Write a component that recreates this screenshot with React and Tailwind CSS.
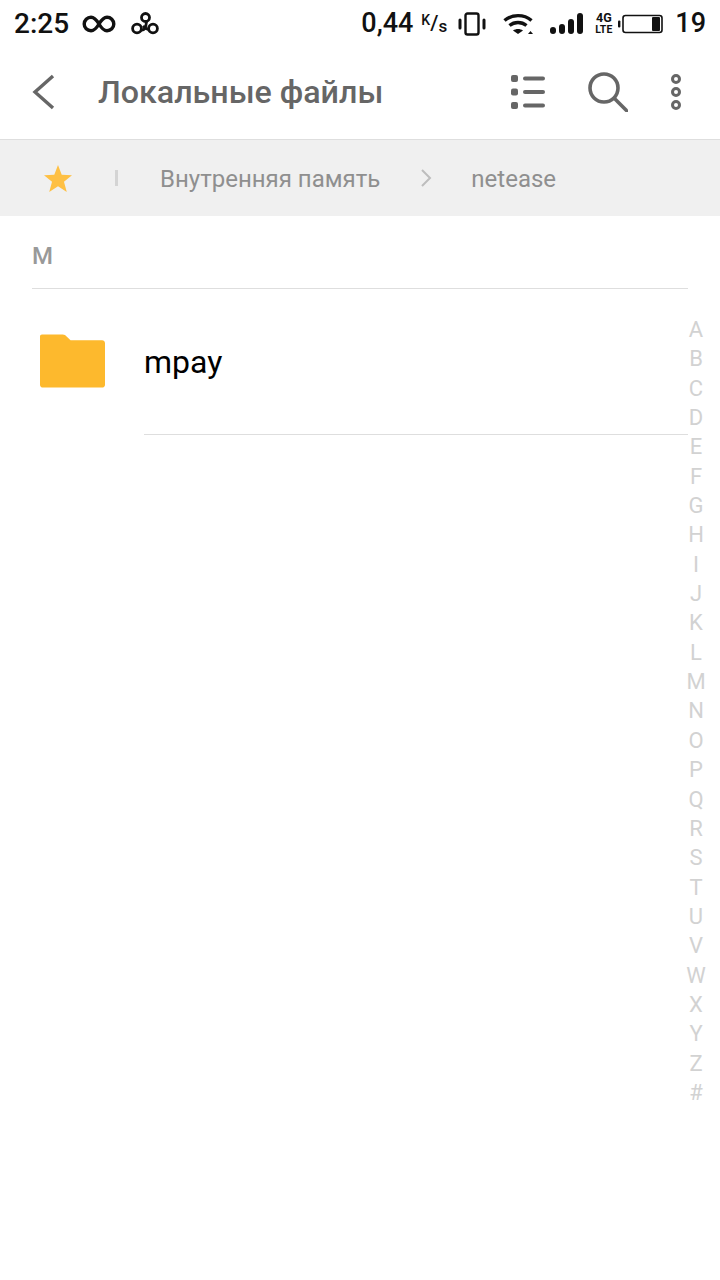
const letters = "ABCDEFGHIJKLMNOPQRSTUVWXYZ#".split("");

function LoopIcon() {
  return (
    <svg width="34" height="20" viewBox="0 0 34 20" fill="none" stroke="#111" strokeWidth="3.400">
      <path d="M17 10C14 5 12 3.200 9 3.200a6.800 6.800 0 0 0 0 13.600c3 0 5-1.800 8-6.800s5-6.800 8-6.800a6.800 6.800 0 0 1 0 13.600c-3 0-5-1.800-8-6.800z" />
    </svg>
  );
}

function TrefoilIcon() {
  return (
    <svg width="28" height="23" viewBox="0 0 28 23" fill="none" stroke="#111" strokeWidth="2.800">
      <circle cx="14.500" cy="5.500" r="4" />
      <circle cx="6" cy="16.500" r="4.400" />
      <circle cx="22" cy="16.500" r="4.400" />
      <path d="M10 18c3 .5 5-1.500 5.500-8.500" />
      <path d="M17.500 17.500c-2-.5-4-2-5.500-3.500" />
    </svg>
  );
}

function VibrateIcon() {
  return (
    <svg width="28" height="24" viewBox="0 0 28 24" fill="none" stroke="#111">
      <rect x="7.500" y="1.500" width="13" height="21" rx="2" strokeWidth="2.400" />
      <path d="M2 8v8M26 8v8" strokeWidth="3" strokeLinecap="round" />
    </svg>
  );
}

function WifiIcon() {
  return (
    <svg width="30" height="22" viewBox="0 0 30 22" fill="none" stroke="#111" strokeWidth="3.400">
      <path d="M1.500 7.500C9 1 21 1 28.500 7.500" />
      <path d="M6.500 12.500c5-4 12-4 17 0" />
      <path d="M10 17.500l5 3.500 5-3.500c-3-2-7-2-10 0z" fill="#111" stroke="none" />
      <path d="M25 21h5l-2.500-3z" fill="#111" stroke="none" />
    </svg>
  );
}

function SignalIcon() {
  return (
    <div className="flex items-end gap-[3px] h-[21px]">
      <div className="w-[6px] h-[7px] rounded-full bg-[#111]" />
      <div className="w-[6px] h-[10px] rounded-full bg-[#111]" />
      <div className="w-[6px] h-[15px] rounded-full bg-[#111]" />
      <div className="w-[6px] h-[21px] rounded-full bg-[#111]" />
    </div>
  );
}

function BatteryIcon() {
  return (
    <svg width="45" height="20" viewBox="0 0 45 20" fill="none">
      <rect x="0" y="6.500" width="2.400" height="7" rx="1" fill="#111" />
      <rect x="5" y="1.500" width="39" height="17" rx="2.500" stroke="#111" strokeWidth="1.600" />
      <rect x="34" y="3" width="8" height="14" rx="1" fill="#111" />
    </svg>
  );
}

function Speed() {
  return (
    <div className="ml-[8px] flex h-[22px] w-[23px] font-medium leading-none">
      <span className="text-[14px]">K</span>
      <span className="text-[21px] self-center">/</span>
      <span className="text-[17px] self-end">s</span>
    </div>
  );
}

function StatusBar() {
  return (
    <div className="h-[47px] flex items-center pl-[14px] pr-[14px] text-[#111] font-medium text-[27px]">
      <span className="text-[28px] w-[54px] whitespace-nowrap">2:25</span>
      <div className="ml-[14px]"><LoopIcon /></div>
      <div className="ml-[15px]"><TrefoilIcon /></div>
      <div className="ml-auto flex items-center">
        <span className="whitespace-nowrap">0,44</span>
        <Speed />
        <div className="ml-[14px]"><VibrateIcon /></div>
        <div className="ml-[17px]"><WifiIcon /></div>
        <div className="ml-[17px]"><SignalIcon /></div>
        <div className="ml-[12px] flex flex-col items-center font-bold">
          <span className="text-[12.5px] leading-[12px]">4G</span>
          <span className="text-[10.5px] leading-[11px]">LTE</span>
        </div>
        <div className="ml-[6px]"><BatteryIcon /></div>
        <span className="ml-[12px]">19</span>
      </div>
    </div>
  );
}

function Toolbar() {
  return (
    <div className="h-[93px] pb-[2px] flex items-center border-b border-[#dedede] pl-[32px] text-[#666]">
      <svg width="24" height="36" viewBox="0 0 24 36" fill="none" stroke="#666" strokeWidth="3.400">
        <path d="M21 2L3 18l18 16" />
      </svg>
      <h1 className="ml-[42px] text-[32.2px] font-medium whitespace-nowrap">Локальные файлы</h1>
      <div className="ml-auto flex items-center">
        <svg width="34" height="34" viewBox="0 0 34 34" fill="#666">
          <rect x="0" y="0" width="7" height="7" rx="2" />
          <rect x="0" y="13.500" width="7" height="7" rx="2" />
          <rect x="0" y="27" width="7" height="7" rx="2" />
          <rect x="12" y="1.500" width="22" height="4" rx="2" />
          <rect x="12" y="15" width="22" height="4" rx="2" />
          <rect x="12" y="28.500" width="22" height="4" rx="2" />
        </svg>
        <svg className="ml-[43px]" width="40" height="40" viewBox="0 0 40 40" fill="none" stroke="#666" strokeWidth="3.600">
          <circle cx="16" cy="16" r="14" />
          <path d="M26.500 26.500L39 39" strokeLinecap="round" />
        </svg>
        <svg className="ml-[41px] mr-[37px]" width="14" height="38" viewBox="0 0 14 38" fill="none" stroke="#666" strokeWidth="3">
          <circle cx="7" cy="6" r="3.500" />
          <circle cx="7" cy="19" r="3.500" />
          <circle cx="7" cy="32" r="3.500" />
        </svg>
      </div>
    </div>
  );
}

function Breadcrumb() {
  return (
    <div className="h-[76px] bg-[#f0f0f0] flex items-center text-[24px] text-[#8f8f8f]">
      <svg className="ml-[44px] mr-[1px]" width="28" height="28" viewBox="0 0 30 30" fill="#fec044">
        <path d="M15 1l4 10.500 11 .600-8.600 7 3 10.900L15 23.900 5.600 30l3-10.900L0 12.100l11-.600z" />
      </svg>
      <div className="ml-[42px] w-[3px] h-[16px] bg-[#d4d4d4]" />
      <span className="ml-[42px] pt-[1px] whitespace-nowrap">Внутренняя память</span>
      <svg className="ml-[40px]" width="12" height="20" viewBox="0 0 12 20" fill="none" stroke="#bdbdbd" strokeWidth="2">
        <path d="M2 2l8 8-8 8" />
      </svg>
      <span className="ml-[39px] pt-[1px]">netease</span>
    </div>
  );
}

function FileRow() {
  return (
    <div className="h-[145px] pb-[2px] flex items-center pl-[40px]">
      <svg width="65" height="54" viewBox="0 0 66 54" fill="#fdb92d">
        <path d="M2 0h21c2 0 3 1 4 2l4 4h32c1.700 0 3 1.300 3 3v42c0 1.700-1.300 3-3 3H3c-1.700 0-3-1.300-3-3V2c0-1.100.9-2 2-2z" />
      </svg>
      <div className="ml-[39px] pt-[2px] text-[32px] text-black">mpay</div>
    </div>
  );
}

export default function App() {
  return (
    <div className="relative h-[1280px] w-[720px] overflow-hidden bg-white font-['Roboto',sans-serif]">
      <StatusBar />
      <Toolbar />
      <Breadcrumb />
      <div className="mx-[32px] h-[73px] pt-[7px] flex items-center border-b border-[#dedede] text-[24px] font-medium text-[#999]">
        M
      </div>
      <FileRow />
      <div className="ml-[144px] mr-[32px] border-b border-[#dedede]" />
      <div className="absolute top-[315px] right-0 w-[48px] flex flex-col items-center text-[22px] leading-[29.35px] text-[#d2d2d2]">
        {letters.map((l) => (
          <span key={l}>{l}</span>
        ))}
      </div>
    </div>
  );
}
